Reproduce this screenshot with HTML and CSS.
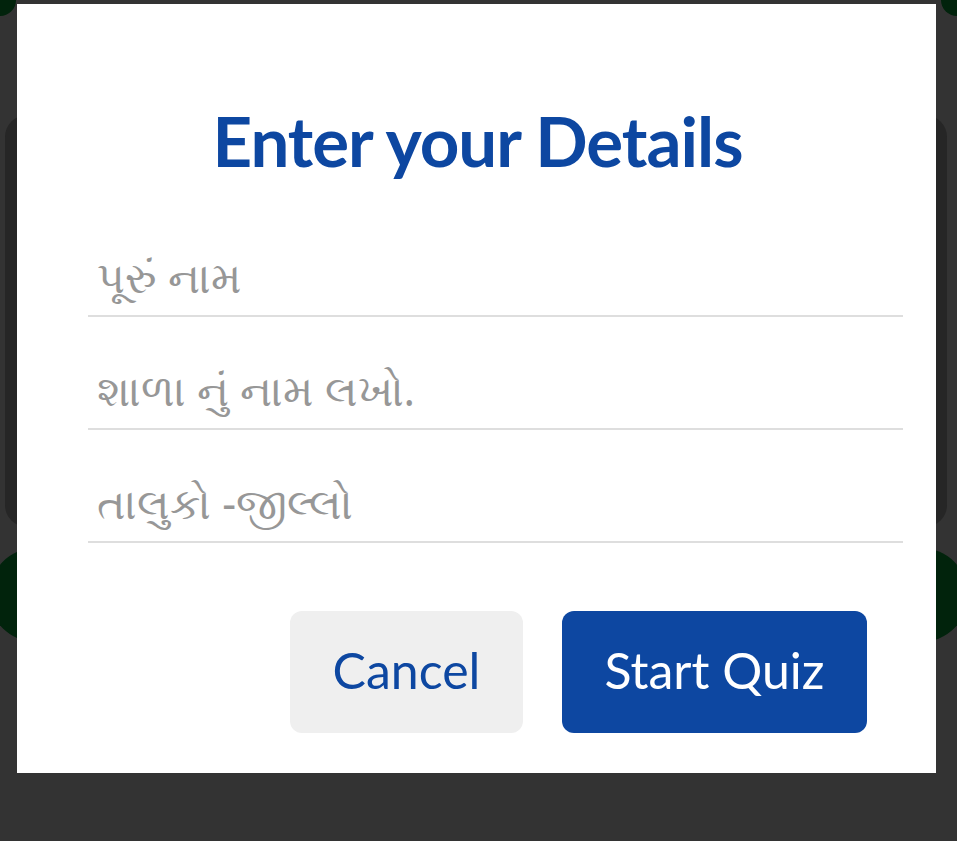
FILE: index.html
```html
<!DOCTYPE html>
<html lang="gu">
<head>
  <meta charset="UTF-8">
  <meta name="viewport" content="width=device-width, initial-scale=1.0">
  <title>Quiz</title>
  <link rel="stylesheet" href="styles.css">
</head>
<body>
  <div class="backdrop">
    <div class="bg-card"></div>
    <div class="bg-band"></div>
    <div class="bg-corner left"></div>
    <div class="bg-corner right"></div>
  </div>

  <div class="overlay">
    <div class="dialog">
      <h1>Enter your Details</h1>

      <div class="fields">
        <input type="text" class="field" placeholder="પૂરું નામ">
        <input type="text" class="field" placeholder="શાળા નું નામ લખો.">
        <input type="text" class="field" placeholder="તાલુકો -જીલ્લો">
      </div>

      <div class="actions">
        <button class="btn btn-cancel">Cancel</button>
        <button class="btn btn-start">Start Quiz</button>
      </div>
    </div>
  </div>
</body>
</html>
```

FILE: styles.css
```css
body {
  margin: 0;
  padding: 0;
  width: 957px;
  height: 841px;
  overflow: hidden;
  background: #333333;
  font-family: 'Lato', 'Noto Sans', sans-serif;
  position: relative;
}

/* page behind the dim overlay */
.backdrop {
  position: absolute;
  inset: 0;
  overflow: hidden;
  z-index: 0;
}

.bg-card {
  position: absolute;
  left: 5px;
  top: 115px;
  width: 942px;
  height: 412px;
  background: #262626;
  border-radius: 22px;
}

.bg-band {
  position: absolute;
  left: -11px;
  top: 548px;
  width: 979px;
  height: 94px;
  background: #01230c;
  border-radius: 48px;
}

.bg-corner {
  position: absolute;
  top: 0;
  width: 16px;
  height: 16px;
  background: #01230c;
}

.bg-corner.left {
  left: 0;
  border-bottom-right-radius: 100%;
}

.bg-corner.right {
  right: 0;
  border-bottom-left-radius: 100%;
}

.overlay {
  position: relative;
  z-index: 1;
  padding: 4px 0 0 17px;
}

.dialog {
  width: 919px;
  height: 769px;
  box-sizing: border-box;
  background: #fff;
  padding: 89px 69px 40px 71px;
  display: flex;
  flex-direction: column;
}

h1 {
  margin: 0;
  text-align: center;
  font-size: 69px;
  font-weight: 700;
  line-height: 96px;
  color: #0d47a1;
  letter-spacing: -1px;
}

.fields {
  display: flex;
  flex-direction: column;
  gap: 33px;
  margin-top: 48px;
  margin-right: -36px;
}

.field {
  height: 80px;
  box-sizing: border-box;
  border: none;
  border-bottom: 2px solid #dedede;
  padding: 0 0 0 9px;
  font-size: 43px;
  font-family: 'Noto Sans', 'Lato', sans-serif;
  color: #333;
  background: transparent;
  outline: none;
}

.field::placeholder {
  color: #979797;
}

.actions {
  margin-top: auto;
  display: flex;
  justify-content: flex-end;
  gap: 39px;
}

.btn {
  height: 122px;
  border: none;
  border-radius: 12px;
  padding: 0 0 5px;
  font-family: 'Lato', sans-serif;
  font-size: 50px;
  cursor: pointer;
}

.btn-cancel {
  width: 233px;
  background: #efefef;
  color: #0d47a1;
}

.btn-start {
  width: 305px;
  background: #0d47a1;
  color: #fff;
}
```
